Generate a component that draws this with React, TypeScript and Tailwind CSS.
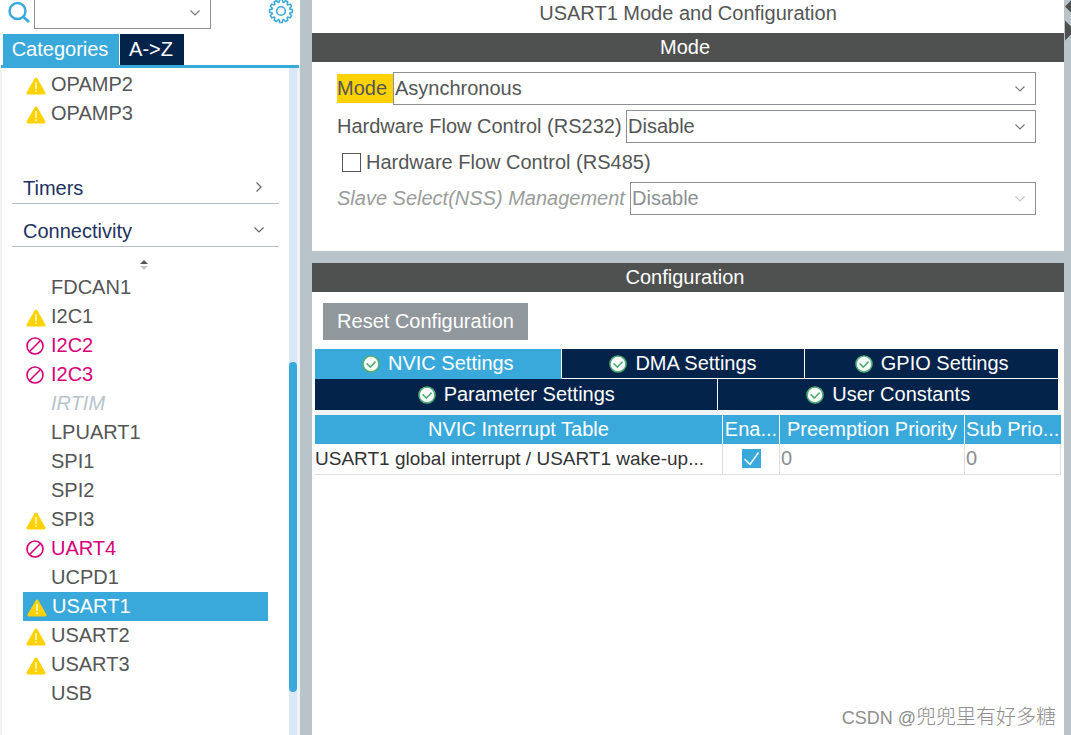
import type { ReactNode } from 'react';

type Status = 'warning' | 'conflict' | 'disabled' | 'none';

interface Peripheral {
  name: string;
  status: Status;
}

const analog: Peripheral[] = [
  { name: 'OPAMP2', status: 'warning' },
  { name: 'OPAMP3', status: 'warning' },
];

const connectivity: Peripheral[] = [
  { name: 'FDCAN1', status: 'none' },
  { name: 'I2C1', status: 'warning' },
  { name: 'I2C2', status: 'conflict' },
  { name: 'I2C3', status: 'conflict' },
  { name: 'IRTIM', status: 'disabled' },
  { name: 'LPUART1', status: 'none' },
  { name: 'SPI1', status: 'none' },
  { name: 'SPI2', status: 'none' },
  { name: 'SPI3', status: 'warning' },
  { name: 'UART4', status: 'conflict' },
  { name: 'UCPD1', status: 'none' },
  { name: 'USART1', status: 'warning' },
  { name: 'USART2', status: 'warning' },
  { name: 'USART3', status: 'warning' },
  { name: 'USB', status: 'none' },
];

const statusColor: Record<Status, string> = {
  warning: 'text-[#545656]',
  none: 'text-[#545656]',
  conflict: 'text-[#d6007b]',
  disabled: 'text-[#b8c3ca] italic',
};

export default function App() {
  return (
    <div className="relative flex min-h-screen bg-[#b8c3ca] font-['Liberation_Sans',Arial,sans-serif] text-xl leading-[29px] text-[#545656]">
      <Sidebar />
      <main className="ml-3 flex min-w-0 flex-1 flex-col">
        <ModePanel />
        <ConfigurationPanel />
      </main>
      <SplitterArrows />
      <p className="absolute right-[15px] bottom-0.5 text-lg leading-[29px] text-[#8e8e8e]">
        CSDN @<span className="font-['Noto_Sans_CJK_SC',sans-serif] text-xl font-light leading-[29px]">兜兜里有好多糖</span>
      </p>
    </div>
  );
}

function Sidebar() {
  return (
    <aside className="flex w-[300px] flex-shrink-0 flex-col bg-white">
      <div className="flex h-[29px] items-end">
        <SearchIcon />
        <div className="relative ml-1 h-[29px] w-[177px]">
          <select
            aria-label="Search peripheral"
            className="h-full w-full appearance-none border border-t-0 border-[#8c9094] bg-white"
          />
          <Chevron className="absolute top-2.5 right-[11px] text-[#777]" />
        </div>
        <button aria-label="Settings" className="ml-[57px] h-[29px]">
          <GearIcon />
        </button>
      </div>
      <div className="mx-px mt-[5px] flex gap-px border-b-3 border-[#39a9dc] pl-0.5 leading-[31px] text-white">
        <button className="w-[116px] bg-[#39a9dc] pr-0.5">Categories</button>
        <button className="w-16 bg-[#03234b] pr-0.5">A-&gt;Z</button>
      </div>

      <div className="flex flex-1 border-l-2 border-[#f2f2f2]">
        <nav className="flex-1 pt-0.5">
          <PeripheralList items={analog} />
          <Category name="Timers" className="mt-[46px]" />
          <Category name="Connectivity" className="mt-[13px]" open />
          <SortHandle />
          <PeripheralList items={connectivity} selected="USART1" />
        </nav>
        <div className="w-[11px] border-r-3 border-[#eff3f7] bg-[#dae8f4]">
          <div className="mt-[294px] h-[330px] rounded-full bg-[#39a9dc]" />
        </div>
      </div>
    </aside>
  );
}

function Category({ name, className, open }: { name: string; className: string; open?: boolean }) {
  return (
    <button
      aria-expanded={!!open}
      className={`mx-2.5 flex w-[267px] items-center justify-between border-b border-[#b3bfc5] pr-[15px] pl-[11px] text-left text-[#22315f] ${className}`}
    >
      {name}
      <Chevron className={open ? 'mb-1 text-[#666]' : 'mb-1 -rotate-90 text-[#666]'} />
    </button>
  );
}

function PeripheralList({ items, selected }: { items: Peripheral[]; selected?: string }) {
  return (
    <ul>
      {items.map((item) => (
        <li key={item.name} className="pr-[21px] pl-[21px]">
          <button
            className={`flex w-full items-center text-left ${
              item.name === selected ? 'bg-[#39a9dc] pl-1 text-white' : `pl-[3px] ${statusColor[item.status]}`
            }`}
          >
            <span className="mr-[3px] flex w-[22px] justify-start">
              {item.status === 'warning' && <WarningIcon />}
              {item.status === 'conflict' && <ConflictIcon />}
            </span>
            {item.name}
          </button>
        </li>
      ))}
    </ul>
  );
}

function PanelHeader({ children }: { children: ReactNode }) {
  return <h2 className="bg-[#4f5150] pr-1.5 text-center text-white">{children}</h2>;
}

function ModePanel() {
  return (
    <section className="bg-white pb-9">
      <h1 className="h-[33px] text-center leading-[27px]">USART1 Mode and Configuration</h1>
      <PanelHeader>Mode</PanelHeader>
      <div className="flex flex-col pt-2.5 pr-7 pl-[25px]">
        <Field id="mode" label="Mode" value="Asynchronous" labelClass="w-14 bg-[#ffd200]" />
        <Field id="rs232" label="Hardware Flow Control (RS232)" value="Disable" className="mt-[5px]" labelClass="w-[289px]" />
        <label className="my-[5px] ml-[5px] flex items-center gap-[5px]">
          <input type="checkbox" className="size-[19px] appearance-none border border-[#545656] bg-white" />
          Hardware Flow Control (RS485)
        </label>
        <Field
          id="nss"
          label="Slave Select(NSS) Management"
          value="Disable"
          labelClass="w-[293px] italic text-[#9a9c9c]"
          disabled
        />
      </div>
    </section>
  );
}

interface FieldProps {
  id: string;
  label: string;
  value: string;
  labelClass: string;
  className?: string;
  disabled?: boolean;
}

function Field({ id, label, value, labelClass, className = '', disabled }: FieldProps) {
  return (
    <div className={`flex items-center ${className}`}>
      <label htmlFor={id} className={`flex-shrink-0 whitespace-nowrap ${labelClass}`}>
        {label}
      </label>
      <div className="relative min-w-0 flex-1">
        <select
          id={id}
          disabled={disabled}
          className={`block h-[33px] w-full appearance-none border border-[#8c9094] bg-white pl-px opacity-100 ${
            disabled ? 'text-[#8c9094]' : 'text-[#545656]'
          }`}
        >
          <option>{value}</option>
        </select>
        <Chevron
          className={`pointer-events-none absolute top-3.5 right-[11px] ${disabled ? 'text-[#c4c8ca]' : 'text-[#777]'}`}
        />
      </div>
    </div>
  );
}

function ConfigurationPanel() {
  return (
    <section className="mt-3 flex-1 bg-white">
      <PanelHeader>Configuration</PanelHeader>
      <button className="mt-[11px] ml-[11px] block h-[37px] w-[205px] bg-[#90979d] text-white">
        Reset Configuration
      </button>
      <div className="mt-[9px] mr-1.5 ml-[3px]" role="tablist">
        <div className="grid grid-cols-[247fr_244fr_253fr]">
          <Tab active>NVIC Settings</Tab>
          <Tab>DMA Settings</Tab>
          <Tab last>GPIO Settings</Tab>
        </div>
        <div className="grid grid-cols-[404fr_340fr]">
          <Tab bottom>Parameter Settings</Tab>
          <Tab bottom last>
            User Constants
          </Tab>
        </div>
      </div>
      <div className="mr-[3px] ml-[3px] border-t-5 border-[#f0f4f7]">
        <InterruptTable />
      </div>
    </section>
  );
}

interface TabProps {
  children: ReactNode;
  active?: boolean;
  last?: boolean;
  bottom?: boolean;
}

function Tab({ children, active, last, bottom }: TabProps) {
  return (
    <button
      role="tab"
      aria-selected={!!active}
      className={`flex items-center justify-center gap-2 text-white ${last ? '' : 'border-r border-r-white'} ${
        bottom ? 'h-[31px]' : 'h-[30px] border-b'
      } ${active ? 'border-b-[#39a9dc] bg-[#39a9dc]' : 'border-b-white bg-[#03234b]'}`}
    >
      <CheckCircle />
      {children}
    </button>
  );
}

function InterruptTable() {
  return (
    <table className="w-full table-fixed border-collapse">
      <colgroup>
        <col />
        <col className="w-[57px]" />
        <col className="w-[185px]" />
        <col className="w-[96px]" />
      </colgroup>
      <thead>
        <tr className="whitespace-nowrap bg-[#39a9dc] text-white">
          <th className="border-r border-white p-0 font-normal">NVIC Interrupt Table</th>
          <th className="border-r border-white p-0 font-normal">Ena...</th>
          <th className="border-r border-white p-0 font-normal">Preemption Priority</th>
          <th className="p-0 font-normal">Sub Prio...</th>
        </tr>
      </thead>
      <tbody>
        <tr className="h-[30px] border-b border-[#dedede]">
          <td className="overflow-hidden border-r border-[#dedede] p-0 text-[19px] whitespace-nowrap text-[#333]">
            USART1 global interrupt / USART1 wake-up...
          </td>
          <td className="border-r border-[#dedede] p-0">
            <span className="relative mx-auto block size-[19px]">
              <input
                type="checkbox"
                aria-label="Enabled"
                defaultChecked
                className="block size-[19px] appearance-none bg-[#39a9dc]"
              />
              <svg viewBox="0 0 19 19" className="pointer-events-none absolute inset-0 fill-none stroke-white">
                <path d="M2.5 10l5.5 5.5 8.5-12" strokeWidth="1.4" />
              </svg>
            </span>
          </td>
          <td className="border-r border-[#dedede] p-0 pl-px text-[#8c9094]">0</td>
          <td className="border-r border-[#dedede] p-0 pl-px text-[#8c9094]">0</td>
        </tr>
      </tbody>
    </table>
  );
}

function Chevron({ className }: { className: string }) {
  return (
    <svg width="10" height="6" viewBox="0 0 10 6" fill="none" stroke="currentColor" strokeWidth="1.2" className={className}>
      <path d="M0.5 0.5L5 5 9.5 0.5" />
    </svg>
  );
}

function SearchIcon() {
  return (
    <svg width="22" height="29" viewBox="0 0 22 29" fill="none" stroke="#39a9dc" className="ml-2">
      <circle cx="9.5" cy="11" r="8" strokeWidth="2.4" />
      <path d="M15 16.5l6 5.5" strokeWidth="2.8" />
    </svg>
  );
}

function GearIcon() {
  const teeth = Array.from({ length: 12 }, (_, i) => i * 30);
  return (
    <svg width="26" height="29" viewBox="0 0 26 29" fill="none" stroke="#39a9dc" strokeWidth="1.5">
      {teeth.map((angle) => (
        <path
          key={angle}
          d="M10.4 2.3l0.7 -0.2 0.6 -2.5 2.6 0 0.6 2.5 0.7 0.2"
          transform={`rotate(${angle} 13 11)`}
        />
      ))}
      <circle cx="13" cy="11" r="4.3" strokeWidth="1.6" />
    </svg>
  );
}

function WarningIcon() {
  return (
    <svg width="20" height="18" viewBox="0 0 20 18" className="mt-0.5">
      <path d="M10 2L2 16h16z" fill="#ffd200" stroke="#ffd200" strokeWidth="3" strokeLinejoin="round" />
      <path d="M10 5v7M10 13.2v1.8" stroke="#fff" strokeWidth="1.3" />
    </svg>
  );
}

function ConflictIcon() {
  return (
    <svg width="18" height="18" viewBox="0 0 18 18" fill="none" stroke="#d6007b" strokeWidth="1.6">
      <circle cx="9" cy="9" r="8" />
      <path d="M3.8 14.2L14.2 3.8" />
    </svg>
  );
}

function CheckCircle() {
  return (
    <svg width="18" height="18" viewBox="0 0 18 18">
      <circle cx="9" cy="9" r="8" fill="#fff" stroke="#4fae75" strokeWidth="1.6" />
      <path d="M4.6 8.4l3.7 3.6 5.3-5.4" fill="none" stroke="#4fae75" strokeWidth="1.6" />
    </svg>
  );
}

function SortHandle() {
  return (
    <svg width="10" height="12" viewBox="0 0 10 12" className="mt-3 mb-0.5 ml-[137px]">
      <path d="M1 5l4-4 4 4z" fill="#545656" />
      <path d="M1 7l4 4 4-4z" fill="#c8c8c8" />
    </svg>
  );
}

function SplitterArrows() {
  return (
    <svg width="7" height="42" viewBox="0 0 7 42" fill="#4f5150" className="flex-shrink-0">
      <path d="M7 0.5L1 6.5l6 6z" />
      <path d="M1 20.5l6 6v8l-6 6z" />
    </svg>
  );
}
